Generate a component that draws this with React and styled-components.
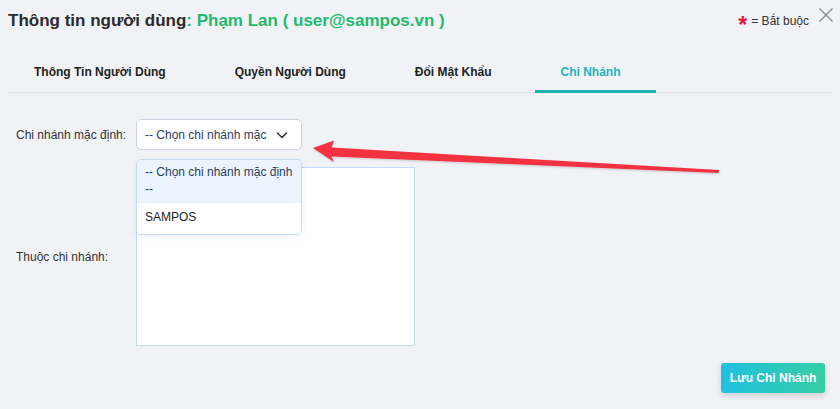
import React from "react";
import styled, { createGlobalStyle } from "styled-components";

const GlobalStyle = createGlobalStyle`
  body {
    margin: 0;
    background: #f1f2f6;
    font-family: "Liberation Sans", Arial, sans-serif;
  }
`;

const tabs = ["Thông Tin Người Dùng", "Quyền Người Dùng", "Đổi Mật Khẩu", "Chi Nhánh"];

function ChevronDown() {
  return (
    <svg width="14" height="14" viewBox="0 0 14 14" fill="none">
      <path d="M2.5 5 L7 9.5 L11.5 5" stroke="#333" strokeWidth="1.6" strokeLinecap="round" strokeLinejoin="round" />
    </svg>
  );
}

function CloseIcon() {
  return (
    <svg width="16" height="16" viewBox="0 0 16 16" fill="none">
      <path d="M1.5 1.5 L14.5 14.5 M14.5 1.5 L1.5 14.5" stroke="#8a8a8a" strokeWidth="1.4" />
    </svg>
  );
}

export default function App() {
  return (
    <>
      <GlobalStyle />
      <Wrap>
        <Header>
          <Title>
            Thông tin người dùng<Accent>: Phạm Lan ( user@sampos.vn )</Accent>
          </Title>
          <HeaderRight>
            <Star>*</Star>
            <Required>= Bắt buộc</Required>
            <CloseBtn>
              <CloseIcon />
            </CloseBtn>
          </HeaderRight>
        </Header>

        <TabBar>
          {tabs.map((t, i) => (
            <Tab key={t} active={i === 3}>
              {t}
            </Tab>
          ))}
        </TabBar>

        <Content>
          <Row>
            <Label>Chi nhánh mặc định:</Label>
            <SelectWrap>
              <SelectBox>
                <SelectText>-- Chọn chi nhánh mặc</SelectText>
                <ChevronDown />
              </SelectBox>
              <Menu>
                <MenuItem selected>-- Chọn chi nhánh mặc định --</MenuItem>
                <MenuItem>SAMPOS</MenuItem>
              </Menu>
            </SelectWrap>
          </Row>
          <Row spaced>
            <Label>Thuộc chi nhánh:</Label>
            <ListBox />
          </Row>
          <Footer>
            <SaveButton>Lưu Chi Nhánh</SaveButton>
          </Footer>
        </Content>

        <Annotation width="840" height="409" viewBox="0 0 840 409">
          <defs>
            <filter id="sh" x="-5%" y="-50%" width="110%" height="200%">
              <feDropShadow dx="0" dy="1" stdDeviation="1.2" floodColor="#000" floodOpacity="0.18" />
            </filter>
          </defs>
          <path
            d="M313 148 L334 140.5 L331.5 147.5 L719 170 L718.5 173 L331.5 156.5 L334 162 Z"
            fill="#f2323f"
            filter="url(#sh)"
          />
        </Annotation>
      </Wrap>
    </>
  );
}

const Wrap = styled.div`
  position: relative;
  height: 409px;
  padding: 0 8px;
  box-sizing: border-box;
  overflow: hidden;
`;

const Header = styled.div`
  display: flex;
  justify-content: space-between;
  align-items: center;
  height: 40px;
`;

const Title = styled.div`
  font-size: 17px;
  font-weight: bold;
  color: #2b2b2b;
  margin-top: 1px;
`;

const Accent = styled.span`
  color: #1fba6e;
`;

const HeaderRight = styled.div`
  display: flex;
  align-items: center;
  align-self: stretch;
  margin-right: -2px;
`;

const Star = styled.span`
  color: #f0143a;
  font-size: 23px;
  font-weight: bold;
  margin-top: 11px;
  margin-right: 4px;
`;

const Required = styled.span`
  font-size: 12px;
  color: #333;
  margin-top: 2px;
`;

const CloseBtn = styled.span`
  display: flex;
  align-self: flex-start;
  margin: 7px 0 0 9px;
`;

const TabBar = styled.div`
  display: flex;
  margin-top: 14px;
  border-bottom: 1px solid #dce0ea;
`;

const Tab = styled.div`
  height: 39px;
  display: flex;
  align-items: center;
  padding: 0 26px;
  margin-right: 17px;
  min-width: ${(p) => (p.active ? "121px" : "auto")};
  font-size: 12px;
  font-weight: bold;
  color: ${(p) => (p.active ? "#1db4b8" : "#222")};
  border-bottom: 3px solid ${(p) => (p.active ? "#1db4b8" : "transparent")};
  margin-bottom: -1px;
  box-sizing: border-box;
`;

const Content = styled.div`
  padding: 26px 0 0 8px;
`;

const Row = styled.div`
  display: flex;
  align-items: center;
  margin-top: ${(p) => (p.spaced ? "17px" : "0")};
`;

const Label = styled.div`
  width: 120px;
  font-size: 12px;
  color: #333;
`;

const SelectWrap = styled.div`
  position: relative;
`;

const SelectBox = styled.div`
  width: 166px;
  height: 31px;
  box-sizing: border-box;
  display: flex;
  align-items: center;
  justify-content: space-between;
  padding: 0 12px 0 8px;
  background: #fff;
  border: 1px solid #ccd3de;
  border-radius: 5px;
`;

const SelectText = styled.span`
  font-size: 12px;
  color: #2e3d5a;
  white-space: nowrap;
`;

const Menu = styled.div`
  position: absolute;
  top: 40px;
  left: 0;
  width: 166px;
  box-sizing: border-box;
  background: #fff;
  border: 1px solid #c4dbf4;
  border-radius: 5px;
  box-shadow: 0 2px 6px rgba(40, 80, 140, 0.08);
  overflow: hidden;
  z-index: 2;
`;

const MenuItem = styled.div`
  padding: ${(p) => (p.selected ? "4px 8px 5px" : "6px 8px 8px")};
  font-size: 12px;
  line-height: 17px;
  color: ${(p) => (p.selected ? "#2e3d5a" : "#222")};
  background: ${(p) => (p.selected ? "#ebf4fd" : "#fff")};
`;

const ListBox = styled.div`
  width: 279px;
  height: 179px;
  box-sizing: border-box;
  background: #fff;
  border: 1px solid #c1daf6;
`;

const Footer = styled.div`
  display: flex;
  justify-content: flex-end;
  margin-top: 17px;
  padding-right: 7px;
`;

const SaveButton = styled.button`
  width: 104px;
  height: 30px;
  border: none;
  border-radius: 3px;
  background: linear-gradient(90deg, #21c0df 0%, #35cea5 100%);
  color: #fff;
  font-family: inherit;
  font-size: 12px;
  font-weight: bold;
  box-shadow: 0 3px 6px rgba(0, 0, 0, 0.14);
`;

const Annotation = styled.svg`
  position: absolute;
  left: 0;
  top: 0;
  pointer-events: none;
  z-index: 5;
`;
